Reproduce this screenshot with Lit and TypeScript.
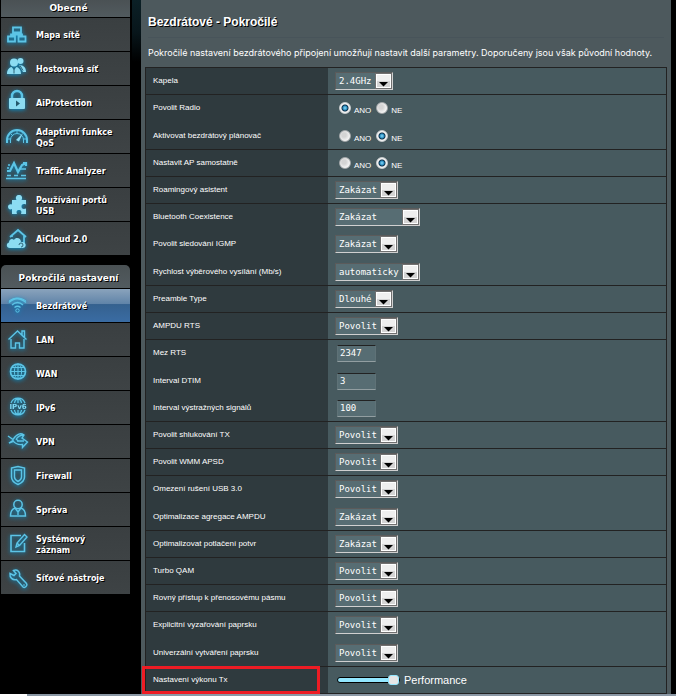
import { LitElement, html, css, svg, nothing } from "lit";
import { customElement } from "lit/decorators.js";
import { classMap } from "lit/directives/class-map.js";

type Row = {
  label: string;
  kind: "select" | "radio" | "text" | "range";
  value: string;
  size?: "small" | "medium" | "large";
  open?: boolean;
  tall?: boolean;
  marked?: boolean;
};

const ROWS: Row[] = [
  { label: "Kapela", kind: "select", value: "2.4GHz", size: "small" },
  { label: "Povolit Radio", kind: "radio", value: "ANO", open: true, tall: true },
  { label: "Aktivovat bezdrátový plánovač", kind: "radio", value: "NE" },
  { label: "Nastavit AP samostatně", kind: "radio", value: "NE" },
  { label: "Roamingový asistent", kind: "select", value: "Zakázat" },
  { label: "Bluetooth Coexistence", kind: "select", value: "Zakázat", size: "large", open: true },
  { label: "Povolit sledování IGMP", kind: "select", value: "Zakázat", open: true, tall: true },
  { label: "Rychlost výběrového vysílání (Mb/s)", kind: "select", value: "automaticky", size: "large" },
  { label: "Preamble Type", kind: "select", value: "Dlouhé", size: "small" },
  { label: "AMPDU RTS", kind: "select", value: "Povolit" },
  { label: "Mez RTS", kind: "text", value: "2347", open: true, tall: true },
  { label: "Interval DTIM", kind: "text", value: "3", open: true },
  { label: "Interval výstražných signálů", kind: "text", value: "100" },
  { label: "Povolit shlukování TX", kind: "select", value: "Povolit" },
  { label: "Povolit WMM APSD", kind: "select", value: "Povolit" },
  { label: "Omezení rušení USB 3.0", kind: "select", value: "Povolit", open: true, tall: true },
  { label: "Optimalizace agregace AMPDU", kind: "select", value: "Zakázat" },
  { label: "Optimalizovat potlačení potvr", kind: "select", value: "Zakázat" },
  { label: "Turbo QAM", kind: "select", value: "Povolit" },
  { label: "Rovný přístup k přenosovému pásmu", kind: "select", value: "Povolit" },
  { label: "Explicitní vyzařování paprsku", kind: "select", value: "Povolit", open: true, tall: true },
  { label: "Univerzální vytváření paprsku", kind: "select", value: "Povolit" },
  { label: "Nastavení výkonu Tx", kind: "range", value: "Performance", marked: true },
];

const ICONS: Record<string, unknown> = {
  map: svg`<path d="M7 5.500h8v5H7zM2 14.500h7v5H2zM12.500 14.500h7v5h-7zM11 11v2M5 14v-1.500h11V14" stroke-width="1.8"/>`,
  guests: svg`<g class="solid"><circle cx="14.500" cy="5" r="3"/><path d="M13 9c5 0 7 3 7 7h-3z"/>
    <circle cx="8" cy="6.500" r="4"/><path d="M1 18c0-4 2-6.500 4.500-7L8 14l2.500-3c2.500.500 4.500 3 4.500 7z"/></g><path class="ink" d="M8 11.500v6M14 9.500l3 5"/>`,
  lock: svg`<path d="M6 9V6a5 5 0 0 1 10 0v3" stroke-width="2.4"/><rect class="solid" x="3" y="8" width="16" height="11" rx="1"/><path class="hole" d="M10 10.500l4 3-4 3z"/>`,
  gauge: svg`<path d="M1 19V16a10 10 0 0 1 20 0v3" stroke-width="2"/><path d="M4.500 19v-3a6.500 6.500 0 0 1 13 0v3M11 6v3M5 10l2 2M2 15h3M17 15h3" stroke-width="1"/><path class="solid" d="M17 9l-4 8.500-3-1.500z"/>`,
  traffic: svg`<path d="M1 13h3l4-8 4 9 4-7 4-2M17 5h3v3" stroke-width="2.2"/><path d="M1 17.500h4M8 17.500h4M15 17.500h5M0 20.500h20M2 7h2M1 10h2M14 11h6" stroke-width="1.3"/>`,
  puzzle: svg`<path class="solid" d="M4 8h4.500C7 5 8.500 3 11 3s4 2 2.500 5H18v4.500c-3-1-4.500 0-4.500 2s1.500 3 4.500 2V22h-5c1-3 0-4-2-4s-3 1-2 4H4v-5c-2 1-4 0-4-2.200S2 11.500 4 12.500z" transform="translate(2 0)"/>`,
  cloud: svg`<path d="M4 11l8-7 8 7M6 11V9.500M18 10v7" stroke-width="1.8"/><path class="solid" d="M4 22c-4 0-4-5-1-5.500 0-3 3-4.500 5-2.500 2-3.500 7-2 7 2 6-1 6 6 1.500 6z"/><path class="ink" d="M13 19a2 2 0 1 1 2 2"/>`,
  wifi: svg`<path d="M3 9.500c5-5 11-5 17 0M6 12c4-3.500 7-3.500 11 0M8.500 14.500c2-1.600 4-1.600 6 0" stroke-width="1.5"/><path d="M3 8c5-4 12-4 17 0" stroke-width="1"/><circle cx="11.500" cy="17.500" r="1.700"/>`,
  home: svg`<path d="M5 12v9h4.500v-5h4v5H18v-9M2.500 12.500L11.500 4l9 8.500M16 8V4h2.500v6" stroke-width="1.4"/>`,
  globe: svg`<circle cx="12" cy="10.500" r="7.500" stroke-width="1.700"/><ellipse cx="12" cy="10.500" rx="3.600" ry="7.500"/><path d="M4.500 10.500h15M6 6.500h12M6 14.500h12M12 3v15" stroke-width="1.1"/>`,
  ipv6: svg`<path d="M5 8a7.500 7.500 0 0 1 14 0M5 15a7.500 7.500 0 0 0 14 0M12 4v4M12 15v4M8.500 8c.500-3 2-4 3.500-4s3 1 3.500 4M8.500 15c.500 3 2 4 3.500 4s3-1 3.500-4" stroke-width="1.3"/><text x="12" y="14" text-anchor="middle">IPv6</text>`,
  vpn: svg`<path d="M2 7l5 3.500C11 4 15 4 18 6l-2 3 5.500 4-5 5.500v-3c-4 .500-7 0-9.500-4L3 14l5-2M18 6c-4 0-6 1-8 4.500M11 12h7M10 10l3 2.500" stroke-width="1.4"/>`,
  shield: svg`<path d="M5.500 5l6.500-1.500L18.500 5v9c0 4-3 6-6.500 7.500C8.500 20 5.500 18 5.500 14z" stroke-width="1.5"/><path d="M8.500 7h7v7c0 2.500-1.500 3.500-3.500 4.500-2-1-3.500-2-3.500-4.500z" stroke-width="1.4"/>`,
  person: svg`<circle cx="12" cy="7.500" r="4.200" stroke-width="1.5"/><path d="M9 11c-3 1-4.500 4-4.500 8h15c0-4-1.500-7-4.500-8M9 11l3 4 3-4M12 15v3" stroke-width="1.4"/>`,
  note: svg`<path d="M15 4.500H5v16h13.500V12" stroke-width="1.600"/><path d="M10 16l1-4 7.500-8.500 2.500 2.500-7.500 8.500zM11 12l2.500 2.500" stroke-width="1.4"/>`,
  wrench: svg`<path d="M4 8.500l4 2 2-2L7.500 5.500c4-1.500 7 1.500 6 5.500l7 7.500c1.500 2-1.500 5-3.500 3.500l-6.500-7.500c-4 1-7-2-6.500-6z" stroke-width="1.5"/><path d="M17.500 19.500l1 1" stroke-width="1.4"/>`,
};

const GENERAL = [
  ["map", "Mapa sítě"],
  ["guests", "Hostovaná síť"],
  ["lock", "AiProtection"],
  ["gauge", "Adaptivní funkce QoS"],
  ["traffic", "Traffic Analyzer"],
  ["puzzle", "Používání portů USB"],
  ["cloud", "AiCloud 2.0"],
];

const ADVANCED = [
  ["wifi", "Bezdrátové"],
  ["home", "LAN"],
  ["globe", "WAN"],
  ["ipv6", "IPv6"],
  ["vpn", "VPN"],
  ["shield", "Firewall"],
  ["person", "Správa"],
  ["note", "Systémový záznam"],
  ["wrench", "Síťové nástroje"],
];

@customElement("side-menu")
class SideMenu extends LitElement {
  static properties = {
    heading: { type: String },
    items: { attribute: false },
    active: { type: String },
  };

  declare heading: string;
  declare items: string[][];
  declare active: string;

  static styles = css`
    :host {
      display: block;
      color: #fff;
      font-family: "DejaVu Sans", Verdana, sans-serif;
      font-weight: bold;
      text-shadow: 1px 1px 0 #000;
    }
    .heading {
      margin: 0 0 1px;
      padding: 3px 0 3px 6px;
      font-size: 9px;
      line-height: 11px;
      text-align: center;
      background: linear-gradient(#4a5154, #525b5f);
    }
    :host([rounded]) .heading {
      padding: 8px 0 4px 6px;
      border-radius: 5px 5px 0 0;
    }
    .list {
      display: grid;
      gap: 1px;
      margin: 0;
      padding: 0;
      list-style: none;
    }
    .item {
      display: flex;
      align-items: center;
      gap: 8px;
      min-height: 33px;
      padding: 0 8px 0 5px;
      box-sizing: border-box;
      color: inherit;
      font-size: 8px;
      line-height: 11px;
      text-decoration: none;
      background: linear-gradient(#3a3f41, #3e4345);
    }
    .name {
      padding-top: 2px;
    }
    .active {
      background: linear-gradient(#8aa3bc 0, #5f83a8 46%, #35618f 47%, #3a6ca3 100%);
    }
    .icon {
      flex: none;
      width: 22px;
      height: 24px;
      margin-bottom: 1px;
      overflow: visible;
      fill: none;
      stroke: #5cc4e6;
      filter: drop-shadow(0 1px 2px #0a90c8);
    }
    .icon .solid {
      fill: #8cdcf2;
      stroke: none;
    }
    .icon .ink {
      stroke: #2d6478;
    }
    .icon .hole {
      fill: #24596c;
      stroke: none;
    }
    .icon text {
      fill: #7fd8f4;
      stroke: none;
      font-size: 7px;
      text-shadow: none;
    }
  `;

  render() {
    return html`
      <h2 class="heading">${this.heading}</h2>
      <ul class="list">
        ${this.items.map(
          ([icon, label]) => html`<li>
            <a
              class=${classMap({ item: true, active: label === this.active })}
              href="#"
              aria-current=${label === this.active ? "page" : nothing}
            >
              <svg class="icon" viewBox="0 0 22 24" aria-hidden="true">${ICONS[icon]}</svg>
              <span class="name">${label}</span>
            </a>
          </li>`,
        )}
      </ul>
    `;
  }
}

@customElement("settings-table")
class SettingsTable extends LitElement {
  static styles = css`
    :host {
      display: block;
    }
    .table {
      width: 100%;
      table-layout: fixed;
      border: 1px solid #222;
      border-bottom: 0;
      border-spacing: 0;
      font-size: 8px;
      line-height: 12px;
    }
    .label,
    .value {
      height: 27px;
      padding: 0 7px;
      box-sizing: border-box;
      border-bottom: 1px solid #222;
    }
    .label {
      position: relative;
      width: 35%;
      font-weight: normal;
      text-align: left;
      background: #2f3a3e;
    }
    .value {
      background: #475a5f;
    }
    .open > * {
      padding-bottom: 1px;
      border-bottom: 0;
    }
    .tall > * {
      height: 28px;
      padding-bottom: 2px;
    }
    .marked .label::after {
      content: "";
      position: absolute;
      inset: -1px 8px -1px -4px;
      border: 3px solid #ed1c24;
    }
    .field {
      display: flex;
      align-items: center;
    }
    .select {
      display: grid;
      width: 63px;
      height: 18px;
      box-sizing: border-box;
      border: 1px solid;
      border-color: #5b5b5b #d0d0d0 #d0d0d0 #5b5b5b;
    }
    .small {
      width: 58px;
    }
    .large {
      width: 85px;
    }
    select,
    .arrow {
      grid-area: 1 / 1;
    }
    select,
    .text {
      min-width: 0;
      margin: 0;
      border-radius: 0;
      color: #fff;
      font: 9px/14px "DejaVu Sans Mono", "Liberation Mono", monospace;
      background: #576d73;
    }
    select {
      appearance: none;
      padding: 0 0 0 3px;
      border: 0;
      outline: 0;
    }
    .arrow {
      justify-self: end;
      width: 17px;
      height: 16px;
      pointer-events: none;
    }
    .text {
      width: 39px;
      height: 17px;
      margin-left: 2px;
      padding: 0 2px;
      box-sizing: border-box;
      border: 1px solid #5f7277;
      border-top: 1px solid #222;
      border-bottom-color: #929ea1;
    }
    .choices {
      padding-left: 4px;
      gap: 5px;
    }
    .choice {
      display: flex;
      align-items: center;
      gap: 3px;
    }
    .caption {
      padding-top: 5px;
    }
    input[type="radio"] {
      appearance: none;
      width: 12px;
      height: 12px;
      margin: 0;
      border: 1px solid #a5a9ab;
      border-radius: 50%;
      background: radial-gradient(circle at 40% 40%, #d4d4d4 25%, #f2f2f2 65%);
    }
    input[type="radio"]:checked {
      border-color: #c9cdcf;
      background: radial-gradient(circle, #8fdcf8 0, #2a8fc4 2px, #0d2f48 3px, #f4f4f4 4px) border-box;
    }
    .power {
      gap: 4px;
      padding-left: 2px;
      font-size: 11px;
    }
    input[type="range"] {
      appearance: none;
      width: 63px;
      height: 10px;
      margin: 0;
      background: none;
    }
    input[type="range"]::-webkit-slider-runnable-track {
      height: 6px;
      box-sizing: border-box;
      border: 1px solid #000;
      border-radius: 3px;
      background: #93e7ff;
    }
    input[type="range"]::-webkit-slider-thumb {
      appearance: none;
      width: 11px;
      height: 10px;
      margin-top: -3px;
      box-sizing: border-box;
      border: 1px solid #93e7ff;
      border-radius: 3px;
      background: #e6e6e6;
    }
  `;

  private field(row: Row, id: string) {
    switch (row.kind) {
      case "select":
        return html`<div class=${classMap({ select: true, small: row.size === "small", large: row.size === "large" })}>
          <select id=${id}>
            <option>${row.value}</option>
          </select>
          <svg class="arrow" viewBox="0 0 17 16" aria-hidden="true">
            <rect width="17" height="16" fill="#707070" />
            <rect x="1" y="1" width="15" height="14" fill="#fff" />
            <rect x="2" y="2" width="13" height="6" fill="#efefef" />
            <rect x="2" y="8" width="13" height="6" fill="#d4d4d4" />
            <path d="M4 9h9L8.500 13.500z" fill="#000" />
          </svg>
        </div>`;
      case "radio":
        return html`<div class="field choices" role="radiogroup" aria-labelledby="${id}-label">
          ${["ANO", "NE"].map(
            (option) => html`<label class="choice"
              ><input type="radio" name=${id} .checked=${option === row.value} /><span class="caption">${option}</span></label
            >`,
          )}
        </div>`;
      case "text":
        return html`<div class="field"><input class="text" type="text" id=${id} .value=${row.value} /></div>`;
      case "range":
        return html`<div class="field power">
          <input type="range" id=${id} min="0" max="100" .value=${"100"} /><span>${row.value}</span>
        </div>`;
    }
  }

  render() {
    return html`<table class="table">
      <tbody>
        ${ROWS.map((row, index) => {
          const id = `setting-${index}`;
          return html`<tr class=${classMap({ open: !!row.open, tall: !!row.tall, marked: !!row.marked })}>
            <th class="label" scope="row">
              ${row.kind === "radio"
                ? html`<span id="${id}-label">${row.label}</span>`
                : html`<label for=${id}>${row.label}</label>`}
            </th>
            <td class="value">${this.field(row, id)}</td>
          </tr>`;
        })}
      </tbody>
    </table>`;
  }
}

@customElement("app-root")
class AppRoot extends LitElement {
  static styles = css`
    :host {
      display: block;
      min-height: 100vh;
      color: #fff;
      font-family: "Liberation Sans", Arial, sans-serif;
      background: #000;
    }
    .page {
      display: grid;
      grid-template-columns: 141px minmax(0, 1fr);
      padding-right: 5px;
    }
    .sidebar {
      display: grid;
      align-content: start;
      gap: 10px;
      padding: 0 11px 0 1px;
      background: linear-gradient(#0b2026, #08161b 32px, #000 62px) right top / 9px 62px no-repeat;
    }
    .panel {
      padding: 0 4px;
      background: #4d595d;
    }
    .title {
      margin: 0 3px;
      padding: 14px 0 7px;
      border-bottom: 1px solid #48545a;
      font-size: 12px;
      line-height: 16px;
      text-shadow: 1px 1px 0 #000;
    }
    .intro {
      margin: 0;
      padding: 7px 3px 6px;
      font-family: Inter, "Liberation Sans", sans-serif;
      font-size: 9px;
      line-height: 16px;
    }
    .strip {
      height: 2px;
      background: linear-gradient(90deg, #fff 27px, #8b98a5 27px);
    }
  `;

  render() {
    return html`
      <div class="page">
        <nav class="sidebar">
          <side-menu heading="Obecné" .items=${GENERAL}></side-menu>
          <side-menu rounded heading="Pokročilá nastavení" .items=${ADVANCED} active="Bezdrátové"></side-menu>
        </nav>
        <main class="panel">
          <h1 class="title">Bezdrátové - Pokročilé</h1>
          <p class="intro">
            Pokročilé nastavení bezdrátového připojení umožňují nastavit další parametry. Doporučeny jsou však původní
            hodnoty.
          </p>
          <settings-table></settings-table>
        </main>
      </div>
      <div class="strip"></div>
    `;
  }
}
